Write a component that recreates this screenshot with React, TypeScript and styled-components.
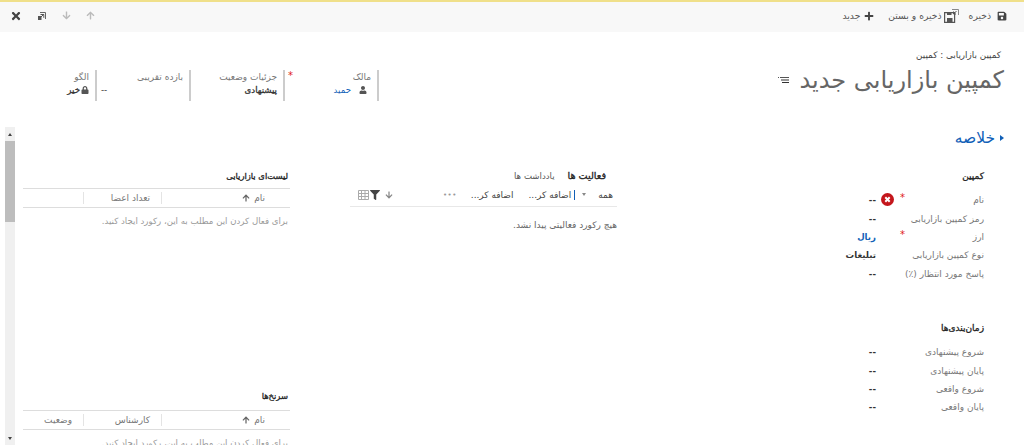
import React from "react";
import styled, { createGlobalStyle } from "styled-components";
import { FaArrowDown, FaArrowUp, FaFilter, FaLock, FaPlus, FaSave, FaTimes, FaUser } from "react-icons/fa";

const GlobalStyle = createGlobalStyle`
  html, body {
    margin: 0;
    padding: 0;
    background: #fff;
  }
  body {
    font-family: "DejaVu Sans", "Liberation Sans", sans-serif;
    font-size: 9px;
    color: #444;
  }
`;

const Page = styled.div`
  direction: rtl;
  width: 1024px;
  height: 445px;
  overflow: hidden;
  display: flex;
  flex-direction: column;
`;

const CommandBar = styled.div`
  height: 27px;
  flex: none;
  border-top: 2px solid #f0e08a;
  background: #f8f8f8;
  display: flex;
  justify-content: space-between;
  align-items: center;
  padding: 0 17px 3px 10px;
`;

const CommandGroup = styled.div<{ $gap: number }>`
  display: flex;
  align-items: center;
  gap: ${(p) => p.$gap}px;
`;

const Command = styled.span<{ $iconGap: number; $lead?: number }>`
  display: flex;
  align-items: center;
  gap: ${(p) => p.$iconGap}px;
  margin-right: ${(p) => p.$lead ?? 0}px;
  font-size: 9.2px;
  color: #555;
  svg {
    color: #444;
  }
`;

const NavIcon = styled.span<{ $color: string }>`
  display: flex;
  color: ${(p) => p.$color};
`;

const Header = styled.div`
  height: 93px;
  flex: none;
  display: flex;
  justify-content: space-between;
  padding: 0 20px 0 0;
`;

const TitleBlock = styled.div`
  padding-top: 18px;
`;

const Breadcrumb = styled.div`
  font-size: 8.8px;
  color: #444;
  padding-right: 3px;
`;

const Title = styled.h1`
  margin: 0;
  padding-top: 2px;
  font-size: 24px;
  line-height: 36px;
  font-weight: 400;
  color: #666;
  display: flex;
  align-items: center;
  gap: 10px;
`;

const HeaderFields = styled.div`
  display: flex;
  margin: 38px 0 0 0;
  height: 31px;
  padding-left: 3px;
`;

const HeaderField = styled.div`
  position: relative;
  width: 86px;
  padding-right: 6px;
  border-right: 2px solid #ccc;
`;

const Required = styled.span`
  position: absolute;
  color: #e02020;
  font-size: 10px;
  line-height: 8px;
`;

const HeaderStar = styled(Required)`
  top: 2px;
  left: 3px;
`;

const HeaderLabel = styled.div`
  font-size: 9px;
  line-height: 14px;
  color: #777;
`;

const HeaderValue = styled.div<{ $left?: boolean; $bold?: boolean; $link?: boolean }>`
  display: flex;
  align-items: center;
  gap: ${(p) => (p.$link ? "8px" : "1px")};
  font-size: 8.6px;
  line-height: 12px;
  -webkit-text-stroke: ${(p) => (p.$bold ? "0.3px" : "0")};
  color: ${(p) => (p.$link ? "#1160b7" : "#333")};
  justify-content: ${(p) => (p.$left ? "flex-end" : "flex-start")};
  padding-left: ${(p) => (p.$left ? "4px" : "0")};
  padding-right: ${(p) => (p.$link ? "4px" : "0")};
  svg {
    color: #555;
  }
`;

const Main = styled.div`
  flex: 1;
  min-height: 0;
  display: flex;
  padding-right: 12px;
  overflow: hidden;
`;

const FormColumn = styled.div`
  width: 372px;
  flex: none;
  margin-left: 23px;
`;

const SummaryTitle = styled.div`
  display: flex;
  align-items: center;
  gap: 5px;
  font-size: 15.5px;
  line-height: 26px;
  color: #1160b7;
  padding-right: 8px;
`;

const Triangle = styled.span`
  width: 0;
  height: 0;
  border-top: 3px solid transparent;
  border-bottom: 3px solid transparent;
  border-right: 4px solid #1160b7;
  transform: rotate(180deg);
`;

const FormSection = styled.div<{ $top: number }>`
  margin-top: ${(p) => p.$top}px;
  padding-right: 28px;
`;

const SectionHeading = styled.div`
  font-size: 9px;
  -webkit-text-stroke: 0.3px;
  color: #222;
  line-height: 14px;
  margin-bottom: 8px;
`;

const FormRow = styled.div`
  position: relative;
  display: flex;
  height: 18.4px;
  align-items: center;
`;

const FieldLabel = styled.div`
  width: 108px;
  flex: none;
  font-size: 9px;
  color: #777;
  white-space: nowrap;
`;

const FieldValue = styled.div<{ $link?: boolean }>`
  font-size: 8.6px;
  font-weight: 700;
  color: ${(p) => (p.$link ? "#1160b7" : "#333")};
`;

const RowStar = styled(Required)`
  top: 3px;
  right: 79px;
`;

const ErrorMark = styled.span`
  position: absolute;
  top: 2px;
  right: 90px;
  display: flex;
`;

const MiddleColumn = styled.div`
  width: 267px;
  flex: none;
  margin-left: 60px;
  padding-top: 44px;
`;

const Tabs = styled.div`
  display: flex;
  gap: 13px;
  padding-right: 11px;
  line-height: 14px;
`;

const Tab = styled.span<{ $active?: boolean }>`
  font-size: ${(p) => (p.$active ? "9.6px" : "8.6px")};
  -webkit-text-stroke: ${(p) => (p.$active ? "0.3px" : "0")};
  color: ${(p) => (p.$active ? "#222" : "#555")};
`;

const ActivityBar = styled.div`
  height: 23px;
  display: flex;
  align-items: center;
  justify-content: space-between;
  padding: 0 4px 0 8px;
  border-bottom: 1px solid #e8e8e8;
  font-size: 9px;
  color: #444;
`;

const ActivityGroup = styled.div<{ $gap: number }>`
  display: flex;
  align-items: center;
  gap: ${(p) => p.$gap}px;
`;

const Caret = styled.span`
  width: 0;
  height: 0;
  margin: 0 12px 0 7px;
  border-left: 2.5px solid transparent;
  border-right: 2.5px solid transparent;
  border-top: 3px solid #888;
`;

const Separator = styled.span`
  width: 1px;
  height: 10px;
  background: #1160b7;
  margin-left: 3px;
`;

const Dots = styled.span`
  color: #999;
  font-size: 7px;
  letter-spacing: 0.5px;
  margin-right: 14px;
`;

const ActivityAdd = styled.span`
  margin-right: 15px;
`;

const SortIcon = styled(NavIcon)`
  margin-left: 4px;
`;

const EmptyNote = styled.div`
  font-size: 9px;
  color: #666;
  padding-top: 13px;
`;

const ListColumn = styled.div`
  width: 267px;
  flex: none;
  padding-top: 44px;
`;

const ListBlock = styled.div<{ $top?: number }>`
  height: 59px;
  margin-top: ${(p) => p.$top ?? 0}px;
`;

const ListHeading = styled.div<{ $gap: number }>`
  font-size: 8.4px;
  -webkit-text-stroke: 0.3px;
  color: #222;
  line-height: 14px;
  padding: 0 2px ${(p) => p.$gap}px 0;
`;

const GridHead = styled.div`
  display: grid;
  grid-template-columns: 129px 78px 60px;
  height: 18px;
  border-top: 1px solid #ddd;
  border-bottom: 1px solid #ddd;
  align-items: center;
`;

const GridCell = styled.div`
  display: flex;
  align-items: center;
  gap: 4px;
  height: 12px;
  padding-right: 11px;
  font-size: 9px;
  color: #777;
  border-left: 1px solid #e4e4e4;
  &:first-child {
    padding-right: 25px;
  }
  &:last-child {
    border-left: 0;
  }
  svg {
    color: #666;
  }
`;

const GridEmpty = styled.div`
  font-size: 8.6px;
  color: #999;
  padding: 8px 2px 0 0;
  white-space: nowrap;
`;

const ScrollBar = styled.div`
  width: 10px;
  flex: none;
  margin: 2px 8px 0 5px;
  background: #f0f0f0;
  display: flex;
  flex-direction: column;
`;

const ScrollArrow = styled.div<{ $down?: boolean }>`
  height: 14px;
  flex: none;
  margin-top: ${(p) => (p.$down ? "auto" : "0")};
  display: flex;
  align-items: center;
  justify-content: center;
  &::before {
    content: "";
    border-left: 2.5px solid transparent;
    border-right: 2.5px solid transparent;
    border-${(p) => (p.$down ? "top" : "bottom")}: 3px solid #444;
  }
`;

const ScrollThumb = styled.div`
  height: 81px;
  background: #bdbdbd;
`;

const PopoutIcon = () => (
  <svg width="10" height="10" viewBox="0 0 10 10" fill="none">
    <path d="M3 1.5h5.5V8" stroke="#666" strokeWidth="1" />
    <path d="M1 5h3.5v4H1z" fill="#555" />
    <path d="M6.8 3.2L3.5 6.5M3.5 3.5h3.3v3.3" stroke="#555" strokeWidth="1" />
  </svg>
);

const SaveCloseIcon = () => (
  <svg width="15" height="14" viewBox="0 0 15 14">
    <path d="M.6 3.6h10v9.8H.6z" fill="none" stroke="#555" strokeWidth="1.2" />
    <path d="M3 9h5.5v4.5H3zM3 3.5h4.5v2.5H3z" fill="#555" />
    <path d="M8 .5h6.5V6" fill="none" stroke="#888" strokeWidth="1" />
    <path d="M12.5 2L9.5 5M9.5 2.5V5H12" fill="none" stroke="#555" strokeWidth="1" />
  </svg>
);

const MenuIcon = () => (
  <svg width="11" height="6" viewBox="0 0 11 6">
    <path d="M0 0h1v1H0zM2 0h9v1H2z" fill="#555" />
    <path d="M3 2.5h8v1H3zM4 5h7v1H4z" fill="#333" />
  </svg>
);

const GridIcon = () => (
  <svg width="11" height="10" viewBox="0 0 11 10">
    <path d="M.5.5h10v9H.5zM.5 3.5h10M.5 6.5h10M3.5 .5v9M7 .5v9" fill="none" stroke="#aaa" strokeWidth="1" />
  </svg>
);

const ErrorIcon = () => (
  <svg width="13" height="13" viewBox="0 0 13 13">
    <circle cx="6.5" cy="6.5" r="6.5" fill="#c4161c" />
    <path d="M4.3 4.3l4.4 4.4M8.7 4.3L4.3 8.7" stroke="#fff" strokeWidth="2" />
  </svg>
);

const App = () => {
  return (
    <Page>
      <GlobalStyle />
      <CommandBar>
        <CommandGroup $gap={10}>
          <Command $iconGap={6}><FaSave size={10} />ذخیره</Command>
          <Command $iconGap={2}><SaveCloseIcon />ذخیره و بستن</Command>
          <Command $iconGap={4} $lead={4}><FaPlus size={10} />جدید</Command>
        </CommandGroup>
        <CommandGroup $gap={15}>
          <NavIcon $color="#bbb"><FaArrowUp size={9} /></NavIcon>
          <NavIcon $color="#bbb"><FaArrowDown size={9} /></NavIcon>
          <NavIcon $color="#555"><PopoutIcon /></NavIcon>
          <NavIcon $color="#444"><FaTimes size={12} /></NavIcon>
        </CommandGroup>
      </CommandBar>
      <Header>
        <TitleBlock>
          <Breadcrumb>کمپین بازاریابی : کمپین</Breadcrumb>
          <Title>کمپین بازاریابی جدید <MenuIcon /></Title>
        </TitleBlock>
        <HeaderFields>
          <HeaderField>
            <HeaderStar>*</HeaderStar>
            <HeaderLabel>مالک</HeaderLabel>
            <HeaderValue $link><FaUser size={8} />حمید</HeaderValue>
          </HeaderField>
          <HeaderField>
            <HeaderLabel>جزئیات وضعیت</HeaderLabel>
            <HeaderValue $bold>پیشنهادی</HeaderValue>
          </HeaderField>
          <HeaderField>
            <HeaderLabel>بازده تقریبی</HeaderLabel>
            <HeaderValue $left>--</HeaderValue>
          </HeaderField>
          <HeaderField>
            <HeaderLabel>الگو</HeaderLabel>
            <HeaderValue $bold><FaLock size={8} />خیر</HeaderValue>
          </HeaderField>
        </HeaderFields>
      </Header>
      <Main>
        <FormColumn>
          <SummaryTitle><Triangle />خلاصه</SummaryTitle>
          <FormSection $top={18}>
            <SectionHeading>کمپین</SectionHeading>
            <FormRow>
              <FieldLabel>نام</FieldLabel>
              <FieldValue>--</FieldValue>
              <RowStar>*</RowStar>
              <ErrorMark><ErrorIcon /></ErrorMark>
            </FormRow>
            <FormRow>
              <FieldLabel>رمز کمپین بازاریابی</FieldLabel>
              <FieldValue>--</FieldValue>
            </FormRow>
            <FormRow>
              <FieldLabel>ارز</FieldLabel>
              <FieldValue $link>ریال</FieldValue>
              <RowStar>*</RowStar>
            </FormRow>
            <FormRow>
              <FieldLabel>نوع کمپین بازاریابی</FieldLabel>
              <FieldValue>تبلیغات</FieldValue>
            </FormRow>
            <FormRow>
              <FieldLabel>پاسخ مورد انتظار (٪)</FieldLabel>
              <FieldValue>--</FieldValue>
            </FormRow>
          </FormSection>
          <FormSection $top={38}>
            <SectionHeading>زمان‌بندی‌ها</SectionHeading>
            <FormRow>
              <FieldLabel>شروع پیشنهادی</FieldLabel>
              <FieldValue>--</FieldValue>
            </FormRow>
            <FormRow>
              <FieldLabel>پایان پیشنهادی</FieldLabel>
              <FieldValue>--</FieldValue>
            </FormRow>
            <FormRow>
              <FieldLabel>شروع واقعی</FieldLabel>
              <FieldValue>--</FieldValue>
            </FormRow>
            <FormRow>
              <FieldLabel>پایان واقعی</FieldLabel>
              <FieldValue>--</FieldValue>
            </FormRow>
          </FormSection>
        </FormColumn>
        <MiddleColumn>
          <Tabs>
            <Tab $active>فعالیت ها</Tab>
            <Tab>یادداشت ها</Tab>
          </Tabs>
          <ActivityBar>
            <ActivityGroup $gap={0}>
              همه<Caret /><Separator />اضافه کر...
              <ActivityAdd>اضافه کر...</ActivityAdd>
              <Dots>•••</Dots>
            </ActivityGroup>
            <ActivityGroup $gap={1}>
              <SortIcon $color="#888"><FaArrowDown size={8} /></SortIcon>
              <NavIcon $color="#444"><FaFilter size={10} /></NavIcon>
              <GridIcon />
            </ActivityGroup>
          </ActivityBar>
          <EmptyNote>هیچ رکورد فعالیتی پیدا نشد.</EmptyNote>
        </MiddleColumn>
        <ListColumn>
          <ListBlock>
            <ListHeading $gap={5}>لیست‌ای بازاریابی</ListHeading>
            <GridHead>
              <GridCell>نام<FaArrowUp size={8} /></GridCell>
              <GridCell>تعداد اعضا</GridCell>
              <GridCell />
            </GridHead>
            <GridEmpty>برای فعال کردن این مطلب به این، رکورد ایجاد کنید.</GridEmpty>
          </ListBlock>
          <ListBlock $top={161}>
            <ListHeading $gap={7}>سرنخ‌ها</ListHeading>
            <GridHead>
              <GridCell>نام<FaArrowUp size={8} /></GridCell>
              <GridCell>کارشناس</GridCell>
              <GridCell>وضعیت</GridCell>
            </GridHead>
            <GridEmpty>برای فعال کردن این مطلب به این، رکورد ایجاد کنید.</GridEmpty>
          </ListBlock>
        </ListColumn>
        <ScrollBar>
          <ScrollArrow />
          <ScrollThumb />
          <ScrollArrow $down />
        </ScrollBar>
      </Main>
    </Page>
  );
};

export default App;
